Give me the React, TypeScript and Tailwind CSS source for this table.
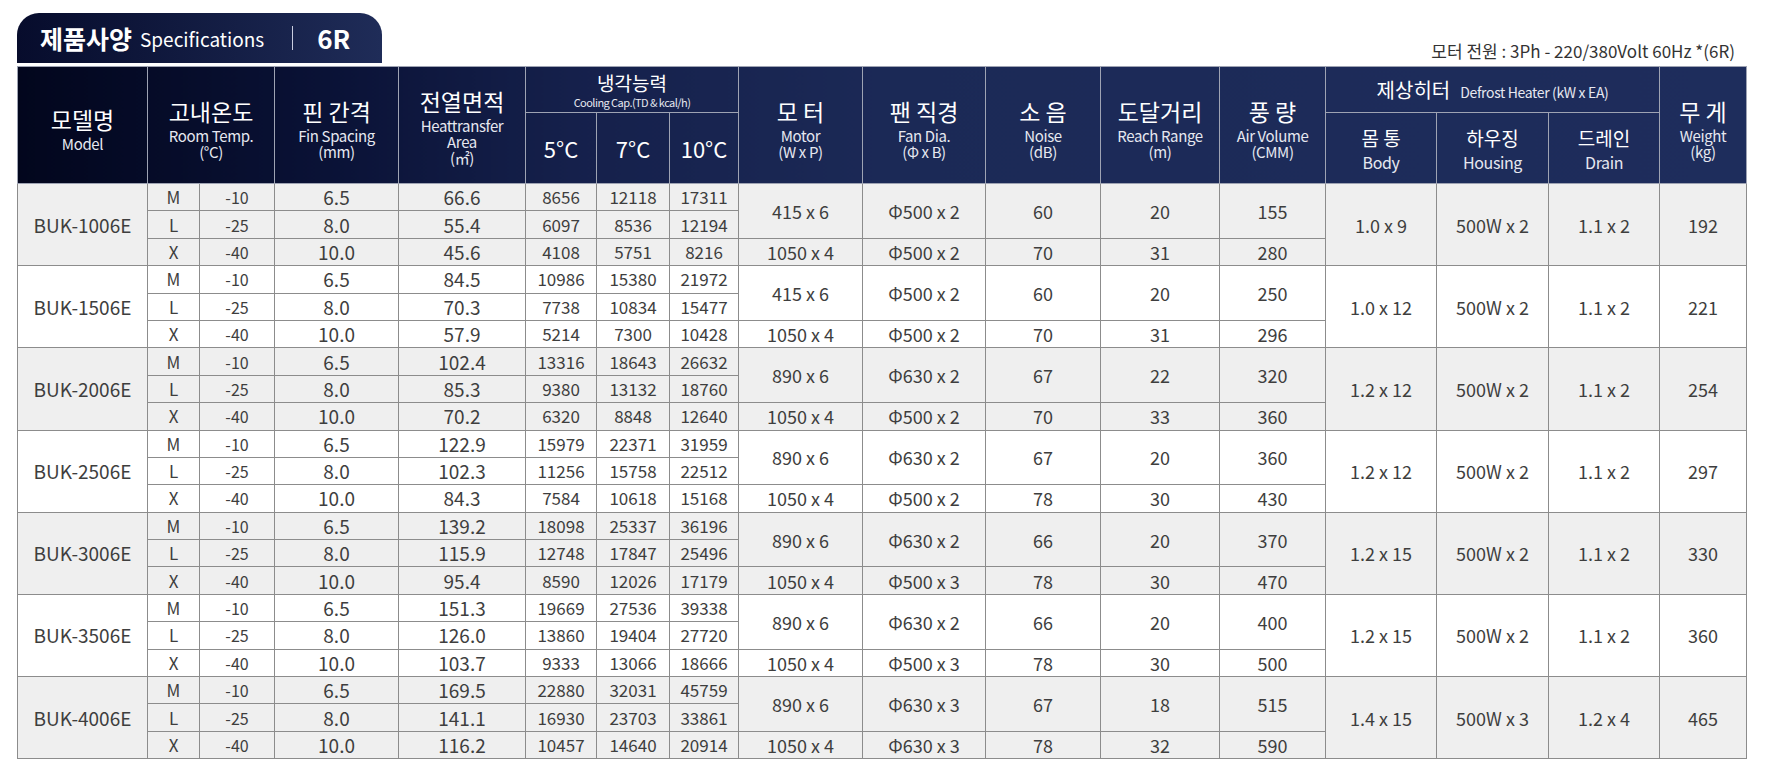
const font = { fontFamily: '"Noto Sans CJK KR", "Noto Sans", sans-serif' };

type Row = [string, string, string, string, string, string, string];
type Group = {
  model: string;
  rows: Row[];
  motor: [string, string];
  fan: [string, string];
  noise: [string, string];
  reach: [string, string];
  air: [string, string];
  body: string;
  housing: string;
  drain: string;
  weight: string;
};

const groups: Group[] = [
  {
    model: 'BUK-1006E',
    rows: [
      ['M', '-10', '6.5', '66.6', '8656', '12118', '17311'],
      ['L', '-25', '8.0', '55.4', '6097', '8536', '12194'],
      ['X', '-40', '10.0', '45.6', '4108', '5751', '8216'],
    ],
    motor: ['415 x 6', '1050 x 4'],
    fan: ['Φ500 x 2', 'Φ500 x 2'],
    noise: ['60', '70'],
    reach: ['20', '31'],
    air: ['155', '280'],
    body: '1.0 x 9',
    housing: '500W x 2',
    drain: '1.1 x 2',
    weight: '192',
  },
  {
    model: 'BUK-1506E',
    rows: [
      ['M', '-10', '6.5', '84.5', '10986', '15380', '21972'],
      ['L', '-25', '8.0', '70.3', '7738', '10834', '15477'],
      ['X', '-40', '10.0', '57.9', '5214', '7300', '10428'],
    ],
    motor: ['415 x 6', '1050 x 4'],
    fan: ['Φ500 x 2', 'Φ500 x 2'],
    noise: ['60', '70'],
    reach: ['20', '31'],
    air: ['250', '296'],
    body: '1.0 x 12',
    housing: '500W x 2',
    drain: '1.1 x 2',
    weight: '221',
  },
  {
    model: 'BUK-2006E',
    rows: [
      ['M', '-10', '6.5', '102.4', '13316', '18643', '26632'],
      ['L', '-25', '8.0', '85.3', '9380', '13132', '18760'],
      ['X', '-40', '10.0', '70.2', '6320', '8848', '12640'],
    ],
    motor: ['890 x 6', '1050 x 4'],
    fan: ['Φ630 x 2', 'Φ500 x 2'],
    noise: ['67', '70'],
    reach: ['22', '33'],
    air: ['320', '360'],
    body: '1.2 x 12',
    housing: '500W x 2',
    drain: '1.1 x 2',
    weight: '254',
  },
  {
    model: 'BUK-2506E',
    rows: [
      ['M', '-10', '6.5', '122.9', '15979', '22371', '31959'],
      ['L', '-25', '8.0', '102.3', '11256', '15758', '22512'],
      ['X', '-40', '10.0', '84.3', '7584', '10618', '15168'],
    ],
    motor: ['890 x 6', '1050 x 4'],
    fan: ['Φ630 x 2', 'Φ500 x 2'],
    noise: ['67', '78'],
    reach: ['20', '30'],
    air: ['360', '430'],
    body: '1.2 x 12',
    housing: '500W x 2',
    drain: '1.1 x 2',
    weight: '297',
  },
  {
    model: 'BUK-3006E',
    rows: [
      ['M', '-10', '6.5', '139.2', '18098', '25337', '36196'],
      ['L', '-25', '8.0', '115.9', '12748', '17847', '25496'],
      ['X', '-40', '10.0', '95.4', '8590', '12026', '17179'],
    ],
    motor: ['890 x 6', '1050 x 4'],
    fan: ['Φ630 x 2', 'Φ500 x 3'],
    noise: ['66', '78'],
    reach: ['20', '30'],
    air: ['370', '470'],
    body: '1.2 x 15',
    housing: '500W x 2',
    drain: '1.1 x 2',
    weight: '330',
  },
  {
    model: 'BUK-3506E',
    rows: [
      ['M', '-10', '6.5', '151.3', '19669', '27536', '39338'],
      ['L', '-25', '8.0', '126.0', '13860', '19404', '27720'],
      ['X', '-40', '10.0', '103.7', '9333', '13066', '18666'],
    ],
    motor: ['890 x 6', '1050 x 4'],
    fan: ['Φ630 x 2', 'Φ500 x 3'],
    noise: ['66', '78'],
    reach: ['20', '30'],
    air: ['400', '500'],
    body: '1.2 x 15',
    housing: '500W x 2',
    drain: '1.1 x 2',
    weight: '360',
  },
  {
    model: 'BUK-4006E',
    rows: [
      ['M', '-10', '6.5', '169.5', '22880', '32031', '45759'],
      ['L', '-25', '8.0', '141.1', '16930', '23703', '33861'],
      ['X', '-40', '10.0', '116.2', '10457', '14640', '20914'],
    ],
    motor: ['890 x 6', '1050 x 4'],
    fan: ['Φ630 x 3', 'Φ630 x 3'],
    noise: ['67', '78'],
    reach: ['18', '32'],
    air: ['515', '590'],
    body: '1.4 x 15',
    housing: '500W x 3',
    drain: '1.2 x 4',
    weight: '465',
  },
];

const colWidths = [130, 52, 75, 124, 127, 71, 73, 69, 124, 123, 115, 119, 106, 111, 112, 111, 87];

const th = 'border border-[#9ea3b3] text-white font-normal text-center align-middle p-0';
const td = 'border border-[#8c8c8c] text-center align-middle p-0 text-[#3e3e3e] leading-[20px]';

function Head({ ko, en, top = true }: { ko: string; en: string[]; top?: boolean }) {
  return (
    <div className={`flex flex-col items-center ${top ? 'pt-[5px]' : ''}`}>
      <span className="text-[23px] leading-[33px]">{ko}</span>
      <span className="text-[15px] leading-[16px] text-[#e6e8f0] tracking-tight">
        {en.map((e, i) => (
          <span key={e}>
            {i > 0 && <br />}
            {e}
          </span>
        ))}
      </span>
    </div>
  );
}

export default function App() {
  return (
    <div className="bg-white w-[1766px] h-[770px] pl-[17px] pt-[13px]" style={font}>
      <div className="flex items-end w-[1730px]">
        <div className="h-[50px] w-[365px] rounded-t-[22px] bg-gradient-to-r from-[#070c2c] to-[#1f2c58] flex items-center pl-[23px] text-white">
          <span className="text-[25px] font-bold leading-none">제품사양</span>
          <span className="text-[19px] ml-[8px] leading-none">Specifications</span>
          <span className="ml-[28px] w-px h-[24px] bg-[#c9cde0]" />
          <span className="ml-[24px] text-[26px] font-bold leading-none">6R</span>
        </div>
        <div className="ml-auto pr-[12px] pb-[4px] text-[17px] text-[#333] leading-none">
          모터 전원 : 3Ph - 220/380Volt 60Hz *(6R)
        </div>
      </div>

      <table className="mt-[3px] table-fixed border-collapse w-[1730px] bg-[linear-gradient(90deg,#02061d_0%,#0a1236_18%,#15204b_32%,#1b2956_50%,#1e2d5c_100%)]">
        <colgroup>
          {colWidths.map((w, i) => (
            <col key={i} style={{ width: w }} />
          ))}
        </colgroup>
        <thead>
          <tr className="h-[46px]">
            <th rowSpan={2} className={th}>
              <Head ko="모델명" en={['Model']} />
            </th>
            <th rowSpan={2} colSpan={2} className={th}>
              <Head ko="고내온도" en={['Room Temp.', '(°C)']} />
            </th>
            <th rowSpan={2} className={th}>
              <Head ko="핀 간격" en={['Fin Spacing', '(mm)']} />
            </th>
            <th rowSpan={2} className={th}>
              <Head ko="전열면적" en={['Heattransfer', 'Area', '(㎡)']} top={false} />
            </th>
            <th colSpan={3} className={th}>
              <div className="flex flex-col items-center">
                <span className="text-[19px] leading-[24px]">냉각능력</span>
                <span className="text-[11px] leading-[14px] tracking-tighter text-[#e6e8f0]">
                  Cooling Cap.(TD &amp; kcal/h)
                </span>
              </div>
            </th>
            <th rowSpan={2} className={th}>
              <Head ko="모 터" en={['Motor', '(W x P)']} />
            </th>
            <th rowSpan={2} className={th}>
              <Head ko="팬 직경" en={['Fan Dia.', '(Φ x B)']} />
            </th>
            <th rowSpan={2} className={th}>
              <Head ko="소 음" en={['Noise', '(dB)']} />
            </th>
            <th rowSpan={2} className={th}>
              <Head ko="도달거리" en={['Reach Range', '(m)']} />
            </th>
            <th rowSpan={2} className={th}>
              <Head ko="풍 량" en={['Air Volume', '(CMM)']} />
            </th>
            <th colSpan={3} className={th}>
              <span className="text-[20px]">제상히터</span>
              <span className="text-[14px] ml-[10px] tracking-tight text-[#e6e8f0]">Defrost Heater (kW x EA)</span>
            </th>
            <th rowSpan={2} className={th}>
              <Head ko="무 게" en={['Weight', '(kg)']} />
            </th>
          </tr>
          <tr className="h-[71px]">
            {['5°C', '7°C', '10°C'].map((t) => (
              <th key={t} className={th}>
                <span className="text-[22px]">{t}</span>
              </th>
            ))}
            {[
              ['몸 통', 'Body'],
              ['하우징', 'Housing'],
              ['드레인', 'Drain'],
            ].map(([k, e]) => (
              <th key={k} className={th}>
                <div className="flex flex-col items-center pt-[1px]">
                  <span className="text-[19px] leading-[27px]">{k}</span>
                  <span className="text-[16px] leading-[22px] tracking-tight text-[#e6e8f0]">{e}</span>
                </div>
              </th>
            ))}
          </tr>
        </thead>
        <tbody>
          {groups.map((g, gi) => {
            const bg = gi % 2 === 0 ? 'bg-[#efefef]' : 'bg-white';
            return g.rows.map((r, ri) => (
              <tr key={g.model + ri} className={`${bg} h-[27.4px]`}>
                {ri === 0 && (
                  <td rowSpan={3} className={`${td} text-[19px]`}>
                    {g.model}
                  </td>
                )}
                <td className={`${td} text-[17px]`}>{r[0]}</td>
                <td className={`${td} text-[16px]`}>{r[1]}</td>
                <td className={`${td} text-[19px]`}>{r[2]}</td>
                <td className={`${td} text-[19px]`}>{r[3]}</td>
                <td className={`${td} text-[17px]`}>{r[4]}</td>
                <td className={`${td} text-[17px]`}>{r[5]}</td>
                <td className={`${td} text-[17px]`}>{r[6]}</td>
                {ri !== 1 &&
                  [g.motor, g.fan, g.noise, g.reach, g.air].map((pair, pi) => (
                    <td key={pi} rowSpan={ri === 0 ? 2 : 1} className={`${td} text-[18px]`}>
                      {ri === 0 ? pair[0] : pair[1]}
                    </td>
                  ))}
                {ri === 0 &&
                  [g.body, g.housing, g.drain, g.weight].map((v, vi) => (
                    <td key={vi} rowSpan={3} className={`${td} text-[18px]`}>
                      {v}
                    </td>
                  ))}
              </tr>
            ));
          })}
        </tbody>
      </table>
    </div>
  );
}
